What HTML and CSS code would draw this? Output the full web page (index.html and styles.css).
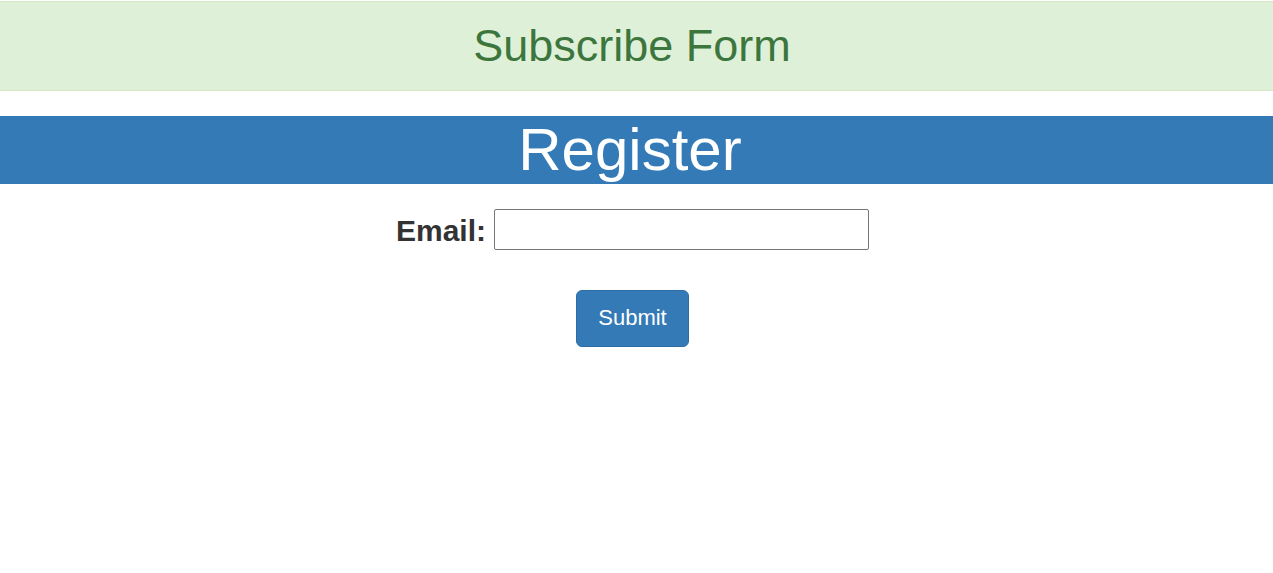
FILE: index.html
```html
<!DOCTYPE html>
<html lang="en">
<head>
<meta charset="utf-8">
<title>Subscribe Form</title>
<link rel="stylesheet" href="styles.css">
</head>
<body>
  <header class="banner">
    <h1 class="banner-title">Subscribe Form</h1>
  </header>
  <section class="register">
    <h2 class="register-title">Register</h2>
  </section>
  <form class="form">
    <div class="form-row">
      <label class="form-label" for="email">Email:</label>
      <input class="form-input" id="email" type="email">
    </div>
    <div class="form-actions">
      <button class="btn-submit" type="button">Submit</button>
    </div>
  </form>
</body>
</html>
```
FILE: styles.css
```css
* { box-sizing: border-box; }
html, body { margin: 0; padding: 0; background: #fff; }
body {
  font-family: "Liberation Sans", Arial, sans-serif;
  color: #333;
  padding-top: 1px;
}
.banner {
  background: #dff0d8;
  border-top: 1px solid #d6e9c6;
  border-bottom: 1px solid #d6e9c6;
  padding: 19px 9px 19px 0;
  text-align: center;
}
.banner-title {
  margin: 0;
  font-size: 45px;
  font-weight: normal;
  line-height: 50px;
  color: #3c763d;
}
.register {
  margin-top: 25px;
  background: #337ab7;
  padding: 0 13px 0 0;
  text-align: center;
}
.register-title {
  margin: 0;
  font-size: 60px;
  font-weight: normal;
  line-height: 68px;
  color: #fff;
}
.form {
  display: flex;
  flex-direction: column;
  align-items: center;
  padding: 25px 8px 0 0;
  gap: 40px;
}
.form-row {
  display: flex;
  align-items: center;
  gap: 8px;
}
.form-label {
  font-size: 30px;
  font-weight: bold;
  line-height: 36px;
  padding-top: 2px;
  color: #333;
}
.form-input {
  width: 375px;
  height: 41px;
  border: 1px solid #767676;
  border-radius: 2px;
  padding: 0 4px;
  font: 18px "Liberation Sans", Arial, sans-serif;
  background: #fff;
}
.btn-submit {
  font: 22px/29px "Liberation Sans", Arial, sans-serif;
  color: #fff;
  background: #337ab7;
  border: 1px solid #2e6da4;
  border-radius: 6px;
  padding: 12px 21px 14px;
  cursor: pointer;
}
```
